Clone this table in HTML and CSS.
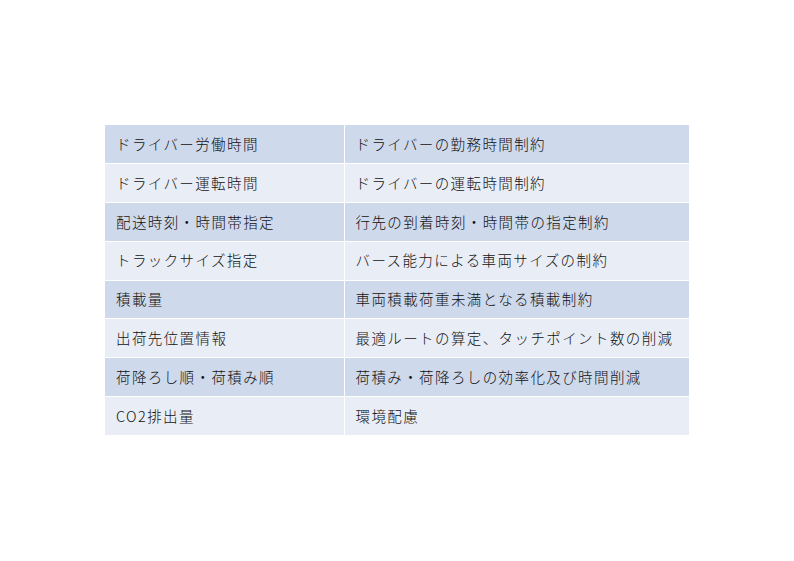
FILE: index.html
```html
<!DOCTYPE html>
<html lang="ja">
<head>
<meta charset="utf-8">
<link rel="stylesheet" href="styles.css">
</head>
<body>
<div class="page">
<table class="constraints">
<colgroup><col class="c1"><col class="c2"></colgroup>
<tbody>
<tr><td>ドライバー労働時間</td><td>ドライバーの勤務時間制約</td></tr>
<tr><td>ドライバー運転時間</td><td>ドライバーの運転時間制約</td></tr>
<tr><td>配送時刻・時間帯指定</td><td>行先の到着時刻・時間帯の指定制約</td></tr>
<tr><td>トラックサイズ指定</td><td>バース能力による車両サイズの制約</td></tr>
<tr><td>積載量</td><td>車両積載荷重未満となる積載制約</td></tr>
<tr><td>出荷先位置情報</td><td>最適ルートの算定、タッチポイント数の削減</td></tr>
<tr><td>荷降ろし順・荷積み順</td><td>荷積み・荷降ろしの効率化及び時間削減</td></tr>
<tr><td>CO2排出量</td><td>環境配慮</td></tr>
</tbody>
</table>
</div>
</body>
</html>
```

FILE: styles.css
```css
html, body {
  margin: 0;
  padding: 0;
  background: #ffffff;
}
.page {
  width: 794px;
  height: 561px;
  padding: 125px 0 0 105px;
  box-sizing: border-box;
}
.constraints {
  border-collapse: collapse;
  width: 584px;
  table-layout: fixed;
  font-family: "Noto Sans CJK JP", "Noto Sans", sans-serif;
  font-weight: 300;
  font-size: 14.5px;
  letter-spacing: 1.4px;
  color: #111111;
}
.constraints tr {
  height: 38.75px;
}
.constraints tr:nth-child(odd) td {
  background: #cfd9ec;
}
.constraints tr:nth-child(even) td {
  background: #e9edf5;
}
.constraints td {
  border: 1px solid #ffffff;
  padding: 0 0 0 11px;
  vertical-align: middle;
  white-space: nowrap;
  line-height: 1;
}
.constraints tr:first-child td { border-top: none; }
.constraints tr:last-child td { border-bottom: none; }
.constraints td:first-child { border-left: none; }
.constraints td:last-child { border-right: none; }
.c1 { width: 239px; }
.c2 { width: 345px; }
```
